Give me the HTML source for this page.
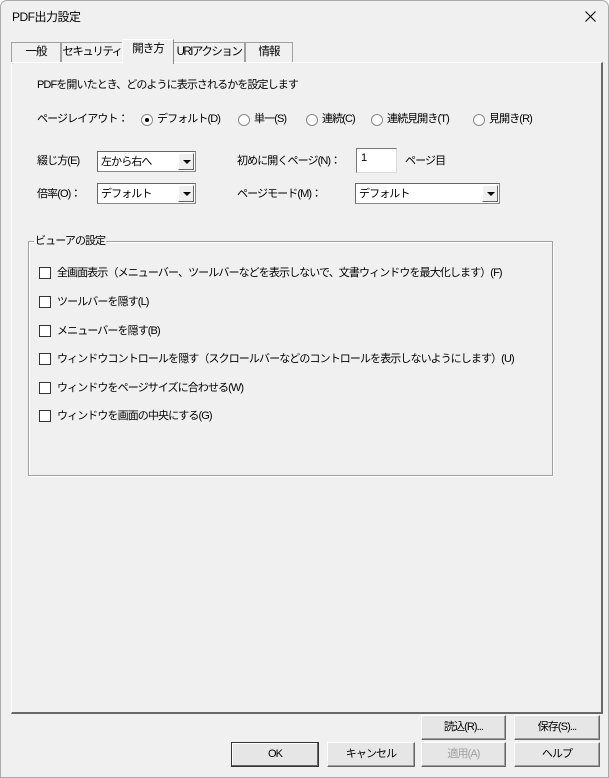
<!DOCTYPE html><html><head><meta charset="utf-8"><style>
*{box-sizing:border-box;margin:0;padding:0}
body{width:609px;height:778px;background:#fff;font-family:"Liberation Sans","Noto Sans CJK JP",sans-serif;font-size:11px;letter-spacing:-0.9px;color:#000;overflow:hidden;position:relative}
.win{position:absolute;left:0;top:0;width:609px;height:778px;background:#f0f0f0;border:1px solid #aaa;border-radius:7px 7px 0 0}
.a{position:absolute;white-space:nowrap;line-height:14px}
.tab{position:absolute;top:41px;height:21px;border:1px solid #a0a0a0;border-bottom:none;background:#f0f0f0;text-align:center;line-height:19px;font-size:11.5px;letter-spacing:-1px;white-space:nowrap;overflow:hidden}
.panel{position:absolute;left:10px;top:61px;width:592px;height:652px;border:1px solid #fff;border-right:2px solid #696969;border-bottom:2px solid #696969;background:#f0f0f0}
.cb{position:absolute;width:12px;height:12px;border:1px solid #333;background:#fff}
.rb{position:absolute;width:12px;height:12px;border:1px solid #888;border-radius:50%;background:#fff}
.combo{position:absolute;height:21px;background:#fff;border:1px solid #888;border-top-color:#666;border-left-color:#666}
.combo span{position:absolute;left:3px;top:3px;line-height:14px}
.combo i{position:absolute;right:1px;top:1px;width:16px;height:17px;background:#f0f0f0;border:1px solid #fff;border-right-color:#666;border-bottom-color:#666}
.combo i:after{content:"";position:absolute;left:4px;top:6px;border-left:4px solid transparent;border-right:4px solid transparent;border-top:4px solid #000}
.btn{position:absolute;height:25px;background:#e6e6e6;border:1px solid #fff;border-right:1px solid #666;border-bottom:1px solid #666;box-shadow:inset -1px -1px 0 #a0a0a0;text-align:center;line-height:23px}
</style></head><body><div class="win">
<div class="a" style="left:11px;top:9px;font-size:12px;letter-spacing:-0.5px">PDF出力設定</div>
<svg style="position:absolute;left:584px;top:10px" width="11" height="11"><path d="M0.5 0.5L10.5 10.5M10.5 0.5L0.5 10.5" stroke="#000" stroke-width="1.1"/></svg>
<div class="tab" style="left:10px;width:50px">一般</div>
<div class="tab" style="left:60px;width:62px;letter-spacing:-1.5px">セキュリティ</div>
<div class="tab" style="left:172px;width:72px;letter-spacing:-1.5px">URIアクション</div>
<div class="tab" style="left:244px;width:48px">情報</div>
<div class="panel"></div>
<div class="tab" style="left:121px;top:38px;width:52px;height:25px;border-color:#fff #888 transparent #fff;z-index:2">開き方</div>
<div class="a" style="left:36px;top:77px">PDFを開いたとき、どのように表示されるかを設定します</div>
<div class="a" style="left:36px;top:111px">ページレイアウト：</div>
<div class="rb" style="left:140px;top:113px"></div><div style="position:absolute;left:144px;top:117px;width:4px;height:4px;background:#000;border-radius:50%"></div>
<div class="a" style="left:156px;top:111px">デフォルト(D)</div>
<div class="rb" style="left:237px;top:113px"></div><div class="a" style="left:253px;top:111px">単一(S)</div>
<div class="rb" style="left:305px;top:113px"></div><div class="a" style="left:321px;top:111px">連続(C)</div>
<div class="rb" style="left:370px;top:113px"></div><div class="a" style="left:386px;top:111px">連続見開き(T)</div>
<div class="rb" style="left:472px;top:113px"></div><div class="a" style="left:488px;top:111px">見開き(R)</div>
<div class="a" style="left:36px;top:153px">綴じ方(E)</div>
<div class="combo" style="left:96px;top:150px;width:99px"><span>左から右へ</span><i></i></div>
<div class="a" style="left:236px;top:153px">初めに開くページ(N)：</div>
<div style="position:absolute;left:355px;top:147px;width:41px;height:25px;background:#fff;border:1px solid #777;border-right-color:#ddd;border-bottom-color:#ddd"></div>
<div class="a" style="left:360px;top:150px">1</div>
<div class="a" style="left:404px;top:153px">ページ目</div>
<div class="a" style="left:36px;top:186px">倍率(O)：</div>
<div class="combo" style="left:96px;top:182px;width:99px"><span>デフォルト</span><i></i></div>
<div class="a" style="left:236px;top:186px">ページモード(M)：</div>
<div class="combo" style="left:354px;top:182px;width:145px"><span>デフォルト</span><i></i></div>
<div style="position:absolute;left:27px;top:240px;width:525px;height:235px;border:1px solid #a0a0a0;box-shadow:1px 1px 0 #fff,inset 1px 1px 0 #fff"></div>
<div class="a" style="left:33px;top:233px;background:#f0f0f0;padding:0 1px">ビューアの設定</div>
<div class="cb" style="left:38px;top:266px"></div><div class="a" style="left:56px;top:265px">全画面表示（メニューバー、ツールバーなどを表示しないで、文書ウィンドウを最大化します）(F)</div>
<div class="cb" style="left:38px;top:295px"></div><div class="a" style="left:56px;top:294px">ツールバーを隠す(L)</div>
<div class="cb" style="left:38px;top:324px"></div><div class="a" style="left:56px;top:323px">メニューバーを隠す(B)</div>
<div class="cb" style="left:38px;top:352px"></div><div class="a" style="left:56px;top:351px">ウィンドウコントロールを隠す（スクロールバーなどのコントロールを表示しないようにします）(U)</div>
<div class="cb" style="left:38px;top:381px"></div><div class="a" style="left:56px;top:380px">ウィンドウをページサイズに合わせる(W)</div>
<div class="cb" style="left:38px;top:409px"></div><div class="a" style="left:56px;top:408px">ウィンドウを画面の中央にする(G)</div>
<div class="btn" style="left:420px;top:714px;width:85px">読込(R)...</div>
<div class="btn" style="left:513px;top:714px;width:86px">保存(S)...</div>
<div class="btn" style="left:230px;top:741px;width:88px;border:1px solid #333;box-shadow:inset -1px -1px 0 #666,inset 1px 1px 0 #fff">OK</div>
<div class="btn" style="left:326px;top:741px;width:88px">キャンセル</div>
<div class="btn" style="left:420px;top:741px;width:85px;color:#a0a0a0">適用(A)</div>
<div class="btn" style="left:513px;top:741px;width:86px">ヘルプ</div>
</div></body></html>
